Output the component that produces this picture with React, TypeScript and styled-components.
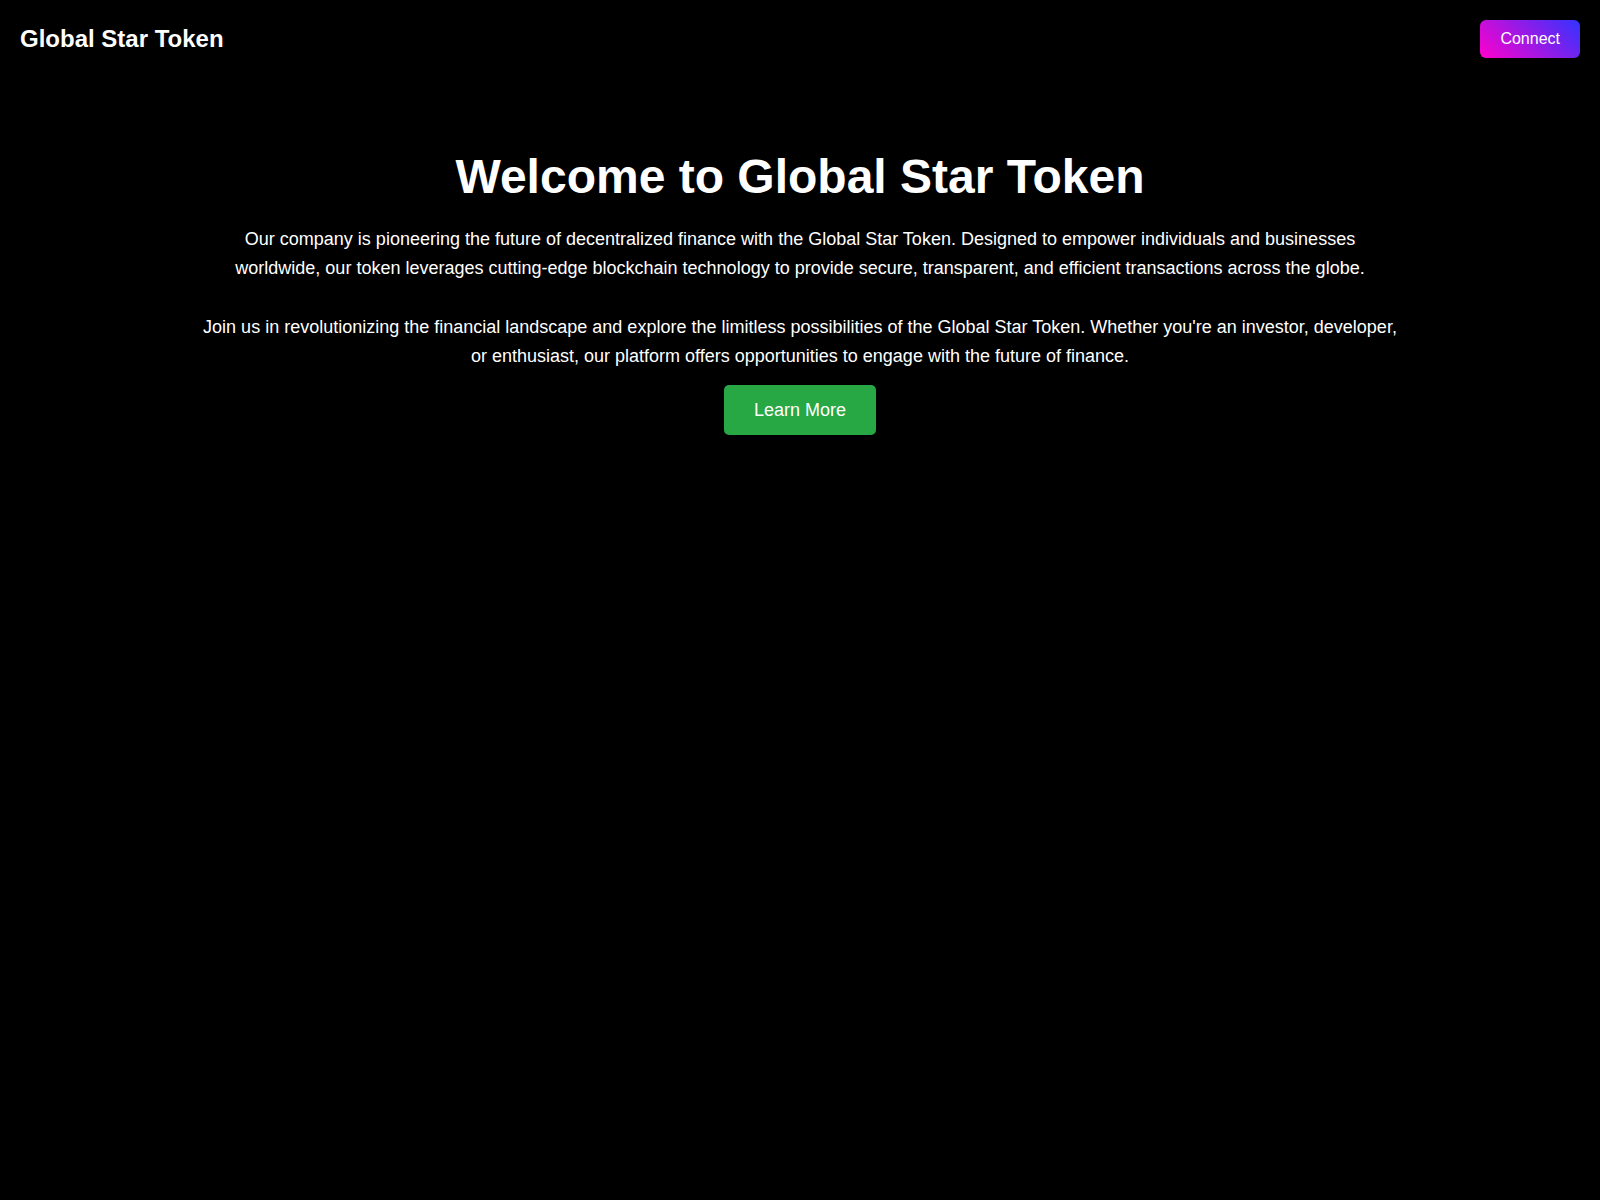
import React from 'react';
import styled, { createGlobalStyle } from 'styled-components';

const GlobalStyle = createGlobalStyle`
  html, body {
    margin: 0;
    padding: 0;
    background: #000;
  }

  body {
    min-height: 100vh;
    color: #fff;
    font-family: "Liberation Sans", Arial, sans-serif;
  }
`;

const Page = styled.div`
  min-height: 100vh;
  background: #000;
`;

const Header = styled.header`
  display: flex;
  justify-content: space-between;
  align-items: center;
  padding: 20px;
`;

const Logo = styled.div`
  font-size: 24px;
  font-weight: 700;
  color: #fff;
`;

const ConnectButton = styled.button`
  padding: 10px 20px;
  border: none;
  border-radius: 6px;
  background: linear-gradient(45deg, #ff00cc, #3333ff);
  color: #fff;
  font-family: inherit;
  font-size: 16px;
  line-height: 18px;
  cursor: pointer;
`;

const Hero = styled.section`
  display: flex;
  flex-direction: column;
  align-items: center;
  padding: 71px 20px 0;
  text-align: center;
`;

const Title = styled.h1`
  margin: 0 0 21px;
  font-size: 48px;
  font-weight: 700;
  line-height: normal;
`;

const Intro = styled.div`
  max-width: 1200px;
`;

const Paragraph = styled.p`
  margin: 0;
  font-size: 18px;
  line-height: 29px;

  & + & {
    margin-top: 30px;
  }
`;

const LearnMoreButton = styled.button`
  margin-top: 14px;
  padding: 15px 30px;
  border: none;
  border-radius: 5px;
  background: #28a745;
  color: #fff;
  font-family: inherit;
  font-size: 18px;
  line-height: 20px;
  cursor: pointer;
`;

const App: React.FC = () => {
  return (
    <Page>
      <GlobalStyle />
      <Header>
        <Logo>Global Star Token</Logo>
        <ConnectButton>Connect</ConnectButton>
      </Header>
      <Hero>
        <Title>Welcome to Global Star Token</Title>
        <Intro>
          <Paragraph>
            Our company is pioneering the future of decentralized finance with the Global Star Token. Designed
            to empower individuals and businesses worldwide, our token leverages cutting-edge blockchain
            technology to provide secure, transparent, and efficient transactions across the globe.
          </Paragraph>
          <Paragraph>
            Join us in revolutionizing the financial landscape and explore the limitless possibilities of the
            Global Star Token. Whether you're an investor, developer, or enthusiast, our platform offers
            opportunities to engage with the future of finance.
          </Paragraph>
        </Intro>
        <LearnMoreButton>Learn More</LearnMoreButton>
      </Hero>
    </Page>
  );
};

export default App;
